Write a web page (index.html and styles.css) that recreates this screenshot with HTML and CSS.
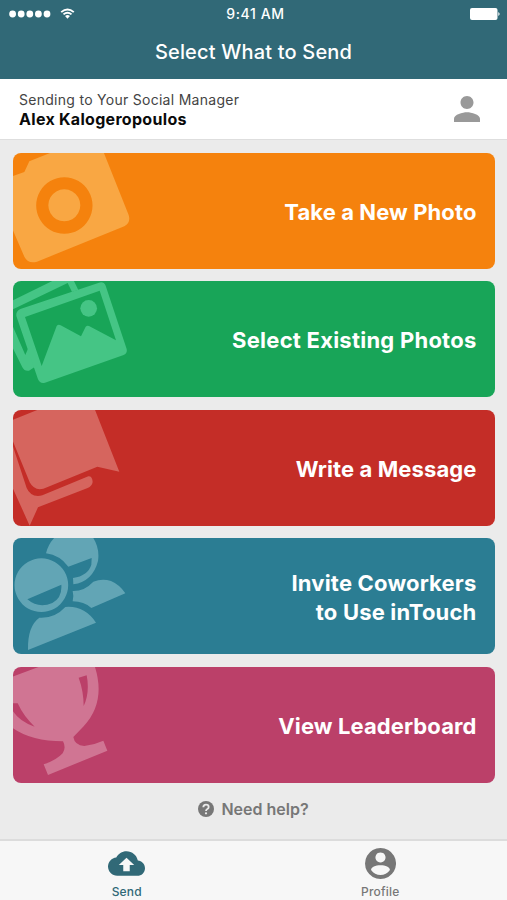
FILE: index.html
```html
<!DOCTYPE html>
<html lang="en">

<head>
    <meta charset="UTF-8">
    <meta name="viewport" content="width=device-width, initial-scale=1.0">
    <title>Select What to Send</title>
    <link rel="stylesheet" href="styles.css">
</head>

<body>
    <header class="header">
        <div class="statusbar">
            <div class="signal">
                <svg class="dots" viewBox="0 0 42 8">
                    <circle cx="3.6" cy="4" r="3.4" />
                    <circle cx="12.2" cy="4" r="3.4" />
                    <circle cx="20.8" cy="4" r="3.4" />
                    <circle cx="29.4" cy="4" r="3.4" />
                    <circle cx="38" cy="4" r="3.4" />
                </svg>
                <svg class="wifi" viewBox="0 0 45 34">
                    <path d="M1 11 Q22.500 -8 44 11 L40 15 Q22.500 0 5 15 Z" />
                    <path d="M8 18 Q22.500 5 37 18 L33 22 Q22.500 13 12 22 Z" />
                    <path d="M15 25 Q22.500 18 30 25 L22.500 33 Z" />
                </svg>
            </div>
            <span class="time">9:41 AM</span>
            <div class="power">
                <svg class="battery" viewBox="0 0 30 12">
                    <rect x="0" y="0" width="27.500" height="12" rx="2" />
                    <path d="M28.300 4 Q31 6 28.300 8 Z" />
                </svg>
            </div>
        </div>
        <h1 class="title">Select What to Send</h1>
    </header>

    <section class="recipient">
        <div>
            <p class="label">Sending to Your Social Manager</p>
            <p class="name">Alex Kalogeropoulos</p>
        </div>
        <svg class="person" viewBox="4 4 16 16">
            <path d="M12 12c2.210 0 4-1.790 4-4s-1.790-4-4-4-4 1.790-4 4 1.790 4 4 4zm0 2c-2.670 0-8 1.340-8 4v2h16v-2c0-2.660-5.330-4-8-4z" />
        </svg>
    </section>

    <main class="cards">
        <a class="card photo">
            <svg class="art" viewBox="24 22 390 348">
                <path fill-rule="evenodd" d="M0 99 L58 79 L73 47 L140 20 L296 20 L371 208 Q378 232 358 242 L96 348 Q70 356 58 333 L20 245 Z M178 95 a84.500 84.500 0 1 0 .1 0 Z M178 131 a48 48 0 1 1 -.1 0 Z" />
            </svg>
            <span>Take a New Photo</span>
        </a>
        <a class="card gallery">
            <svg class="art" viewBox="24 18 390 348">
                <path d="M10 83 L158 10 H203 L220 45 L201 51 L188 24 L24 103 Z" />
                <path d="M15 150 L24 155 L61 240 L72 214 L89 276 L72 287 Q59 290 52 277 L15 202 Z" />
                <path fill-rule="evenodd" d="M46 102 L282 23 Q296 19 302 32 L365 222 Q368 234 356 240 L120 323 Q105 327 99 313 L34 123 Q32 109 46 102 Z M60 126 L110 273 L155 153 Q160 147 167 151 L228 184 L242 155 Q247 150 252 153 L333 196 L284 47 Z" />
                <circle cx="251" cy="100" r="25" />
            </svg>
            <span>Select Existing Photos</span>
        </a>
        <a class="card message">
            <svg class="art" viewBox="24 23 390 348">
                <path d="M20 54 L104 20 L269 20 L343 208 L277 193 L115 259 Q88 266 74 240 L20 108 Z" />
                <path d="M20 120 L65 257 Q78 287 112 279 L250 222 Q262 221 263 239 Q261 251 248 257 L99 315 L74 370 L20 250 Z" />
            </svg>
            <span>Write a Message</span>
        </a>
        <a class="card invite">
            <svg class="art" viewBox="24 18 390 348">
                <path fill-rule="evenodd" d="M109 79 a80.500 80.500 0 1 0 .1 0 Z M67 202 L169 158 Q172 197 142 213 Q101 231 67 202 Z" />
                <path fill-rule="evenodd" d="M123 64 Q129 37 150 15 L263 15 Q285 48 279 87 Q263 149 205 157 L204 138 Q249 131 259 98 L260 78 L190 104 Q165 70 123 64 Z" />
                <path d="M203 177 Q238 178 265 149 Q291 139 318 147 Q344 158 361 184 L259 228 Q237 208 203 208 Q207 192 203 177 Z" />
                <path d="M69 354 Q67 283 103 257 Q149 260 181 225 Q238 220 273 272 Z" />
            </svg>
            <span>Invite Coworkers<br>to Use inTouch</span>
        </a>
        <a class="card leaderboard">
            <svg class="art" viewBox="24 21 390 348">
                <path fill-rule="evenodd" d="M10 55 L103 20 L269 18 Q304 126 236 199 L205 231 Q209 256 238 258 Q269 254 295 242 L307 272 L129 345 L116 313 Q154 301 173 280 Q184 263 174 244 Q77 244 20 202 Z M221 53 L245 46 Q255 97 236 138 Q236 94 221 53 Z M20 130 L38 130 Q56 169 89 200 Q45 186 24 154 Z" />
            </svg>
            <span>View Leaderboard</span>
        </a>
    </main>

    <div class="help">
        <svg class="question" viewBox="0 0 48 48">
            <circle cx="24" cy="24" r="24" />
            <path class="mark" d="M16 19 Q16 11 24 11 Q32 11 32 18 Q32 22 28 24 Q24 26 24 30" />
            <circle class="point" cx="24" cy="37" r="3.4" />
        </svg>
        <span>Need help?</span>
    </div>

    <nav class="tabs">
        <a class="tab active">
            <svg class="cloud" viewBox="0 4 24 16">
                <path d="M19.350 10.040C18.670 6.590 15.640 4 12 4 9.110 4 6.600 5.640 5.350 8.040 2.340 8.360 0 10.910 0 14c0 3.310 2.690 6 6 6h13c2.760 0 5-2.240 5-5 0-2.640-2.050-4.780-4.650-4.960zM14.100 13v4h-4.200v-4H7l5-4.700 5 4.700z" />
            </svg>
            <span>Send</span>
        </a>
        <a class="tab">
            <svg class="account" viewBox="0 0 92 92">
                <path fill-rule="evenodd" d="M46 0 a46 46 0 1 0 .1 0 Z M46 13 a15 15 0 1 1 -.1 0 Z M46 51 C61 51 74 57 74 65 C67 75 57 80 46 80 C35 80 25 75 18 65 C18 57 31 51 46 51 Z" />
            </svg>
            <span>Profile</span>
        </a>
    </nav>
</body>

</html>
```
FILE: styles.css
```css
* {
    box-sizing: border-box;
}

body {
    display: flex;
    flex-direction: column;
    height: 900px;
    margin: 0;
    overflow: hidden;
    background-color: #ebebeb;
    font-family: Inter, "Liberation Sans", sans-serif;
}

p,
h1 {
    margin: 0;
}

svg {
    display: block;
    fill: currentColor;
}

.header {
    height: 79px;
    background-color: #316977;
    color: white;
}

.statusbar {
    display: grid;
    grid-template-columns: 1fr auto 1fr;
    align-items: center;
    height: 27px;
    padding: 0 7px 0 9px;
}

.signal {
    display: flex;
    align-items: center;
    gap: 9px;
}

.dots {
    width: 42px;
    height: 8px;
}

.wifi {
    width: 15px;
    height: 11px;
}

.time {
    padding-left: 2px;
    font-size: 14px;
    font-weight: 500;
    letter-spacing: 0.6px;
}

.power {
    display: flex;
    justify-content: flex-end;
}

.battery {
    width: 30px;
    height: 12px;
}

.title {
    font-size: 20px;
    font-weight: 500;
    line-height: 51px;
    letter-spacing: 0.18px;
    text-align: center;
}

.recipient {
    display: flex;
    align-items: center;
    justify-content: space-between;
    height: 61px;
    padding: 0 27px 0 19px;
    border-bottom: 1px solid #dedede;
    background-color: white;
}

.label {
    color: #444;
    font-size: 14px;
    line-height: 19px;
    letter-spacing: 0.28px;
}

.name {
    color: #0a0a0a;
    font-size: 16px;
    font-weight: 700;
    line-height: 20px;
    letter-spacing: 0.3px;
}

.person {
    width: 26px;
    height: 26px;
    color: #999;
}

.cards {
    display: grid;
    grid-auto-rows: 116px;
    gap: 12.6px;
    padding: 12.5px 12.5px 0 13px;
}

.card {
    display: flex;
    align-items: center;
    justify-content: space-between;
    padding-right: 18px;
    border-radius: 8px;
    overflow: hidden;
    color: white;
    font-size: 22px;
    font-weight: 700;
    line-height: 29px;
    letter-spacing: 0.1px;
    text-align: right;
}

.card span {
    padding-top: 3px;
}

.art {
    width: 130px;
    height: 116px;
}

.photo {
    background-color: #f5820d;
}

.photo .art {
    color: #f9a743;
}

.gallery {
    background-color: #18a558;
    letter-spacing: 0.24px;
}

.gallery .art {
    color: #45c585;
}

.message {
    background-color: #c42d27;
}

.message .art {
    color: #d6655e;
}

.invite {
    background-color: #2b7d93;
    letter-spacing: 0.18px;
}

.invite .art {
    color: #62a5b5;
}

.leaderboard {
    background-color: #bb4069;
}

.leaderboard .art {
    color: #d07593;
}

.help {
    display: flex;
    align-items: center;
    justify-content: center;
    gap: 7px;
    height: 52px;
    color: #777;
    font-size: 16px;
    font-weight: 600;
}

.question {
    width: 16px;
    height: 16px;
}

.mark {
    fill: none;
    stroke: #ebebeb;
    stroke-width: 5.5;
}

.point {
    fill: #ebebeb;
}

.tabs {
    display: grid;
    grid-template-columns: 1fr 1fr;
    height: 61px;
    margin-top: auto;
    border-top: 2px solid #dcdcdc;
    background-color: #f7f7f7;
}

.tab {
    display: flex;
    flex-direction: column;
    align-items: center;
    justify-content: space-between;
    padding: 7px 0 1px;
    color: #777;
    font-size: 12px;
    font-weight: 500;
    line-height: 14px;
    letter-spacing: 0.2px;
}

.active {
    color: #316977;
}

.cloud {
    width: 37px;
    height: 31px;
}

.account {
    width: 31px;
    height: 31px;
}
```
